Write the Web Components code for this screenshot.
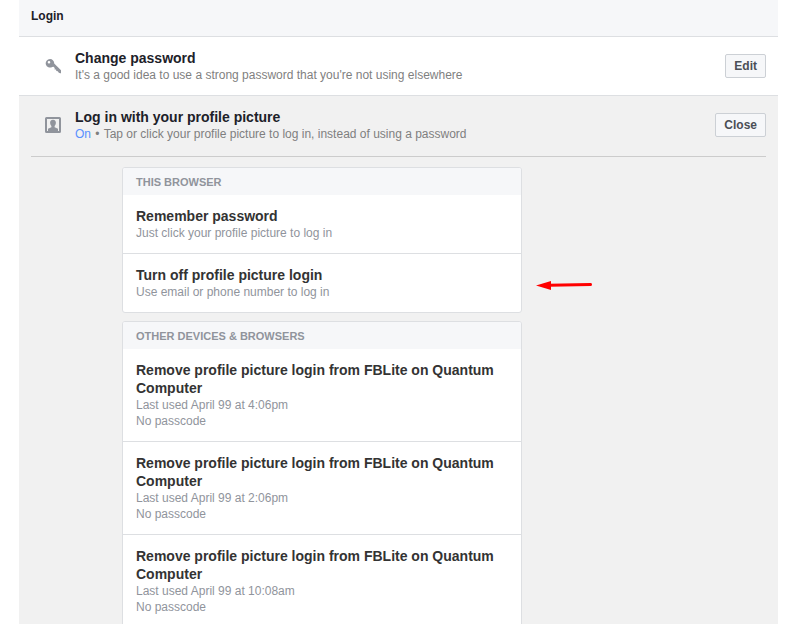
<!DOCTYPE html>
<html lang="en">
<head>
<meta charset="utf-8">
<meta name="viewport" content="width=device-width, initial-scale=1">
<title>Login settings</title>
<style>
    body {
        margin: 0;
        padding: 0 20px 0 19px;
        background: #fff;
        color: #1d2129;
        font-family: "Liberation Sans", Arial, Helvetica, sans-serif;
        font-size: 12px;
        line-height: 16px;
    }
</style>
</head>
<body>
<settings-panel heading="Login">
    <settings-row heading="Change password" action="Edit">
        <settings-icon slot="icon" name="key"></settings-icon>
        It's a good idea to use a strong password that you're not using elsewhere
    </settings-row>
    <settings-row heading="Log in with your profile picture" action="Close" status="On" open>
        <settings-icon slot="icon" name="profile"></settings-icon>
        Tap or click your profile picture to log in, instead of using a password
        <option-card slot="content" heading="This browser">
            <option-item heading="Remember password">Just click your profile picture to log in</option-item>
            <option-item heading="Turn off profile picture login">
                Use email or phone number to log in
                <pointer-arrow slot="marker"></pointer-arrow>
            </option-item>
        </option-card>
        <option-card slot="content" heading="Other devices &amp; browsers">
            <option-item heading="Remove profile picture login from FBLite on Quantum Computer">Last used April 99 at 4:06pm<br>No passcode</option-item>
            <option-item heading="Remove profile picture login from FBLite on Quantum Computer">Last used April 99 at 2:06pm<br>No passcode</option-item>
            <option-item heading="Remove profile picture login from FBLite on Quantum Computer">Last used April 99 at 10:08am<br>No passcode</option-item>
        </option-card>
    </settings-row>
</settings-panel>

<script>
class SettingsPanel extends HTMLElement {
    constructor(){
        super()
        this.shadowDOM = this.attachShadow({ mode: 'open' })
    }

    connectedCallback() {
        this.render()
    }

    render(){
        this.shadowDOM.innerHTML = `
            <style>
                :host {
                    display: block;
                }
                h2 {
                    margin: 0;
                    padding: 8px 12px 12px;
                    background: #f6f7f9;
                    border-bottom: 1px solid #dddfe2;
                    font-size: 12px;
                    line-height: 16px;
                }
            </style>
            <section>
                <h2>${this.getAttribute('heading')}</h2>
                <slot></slot>
            </section>
        `
    }
}

class SettingsRow extends HTMLElement {
    constructor(){
        super()
        this.shadowDOM = this.attachShadow({ mode: 'open' })
    }

    connectedCallback() {
        this.render()
    }

    render(){
        const status = this.getAttribute('status')
        this.shadowDOM.innerHTML = `
            <style>
                :host {
                    display: block;
                    padding: 0 12px;
                    background: #fff;
                }
                :host(:not([open])) {
                    border-bottom: 1px solid #dddfe2;
                }
                :host([open]) {
                    background: #f1f1f1;
                }
                .row {
                    display: flex;
                    align-items: center;
                    padding: 12px 0;
                }
                .icon {
                    display: flex;
                    flex: none;
                    width: 30px;
                    padding-left: 14px;
                }
                .text {
                    flex: 1;
                    min-width: 0;
                    color: #7f7f7f;
                }
                h3 {
                    margin: 0;
                    color: #1d2129;
                    font-size: 14px;
                    line-height: 18px;
                }
                .status {
                    color: #5890ff;
                }
                .dot {
                    margin: 0 1px;
                }
                button {
                    box-sizing: border-box;
                    height: 24px;
                    padding: 0 8px;
                    border: 1px solid #ccd0d5;
                    border-radius: 2px;
                    background: #f6f7f9;
                    color: #4b4f56;
                    font: bold 12px/22px "Liberation Sans", Arial, sans-serif;
                    cursor: pointer;
                }
                .content {
                    display: none;
                }
                :host([open]) .content {
                    display: flex;
                    flex-direction: column;
                    gap: 8px;
                    margin-top: 2px;
                    padding: 10px 0 12px 91px;
                    border-top: 1px solid #ccc;
                }
            </style>
            <div class="row">
                <div class="icon"><slot name="icon"></slot></div>
                <div class="text">
                    <h3>${this.getAttribute('heading')}</h3>
                    ${status ? `<span class="status">${status}</span> <span class="dot">•</span> ` : ''}<slot></slot>
                </div>
                <button type="button">${this.getAttribute('action')}</button>
            </div>
            <div class="content"><slot name="content"></slot></div>
        `
    }
}

class SettingsIcon extends HTMLElement {
    constructor(){
        super()
        this.shadowDOM = this.attachShadow({ mode: 'open' })
    }

    connectedCallback() {
        this.render()
    }

    render(){
        const shapes = {
            key: `<path fill-rule="evenodd" d="M5 1a4.300 4.300 0 1 0 2.200 8l1.300-.2 1.200 1.300-.1 1.300 1.500.2.2 1.400 1.500.2 1 1.600 1.400.4h.8v-3L9.200 5.600A4.300 4.300 0 0 0 5 1zM4 2.900a1.300 1.300 0 1 1 0 2.600 1.300 1.300 0 0 1 0-2.600z"/>`,
            profile: `<path fill-rule="evenodd" d="M1.500 0h13A1.500 1.500 0 0 1 16 1.500v13a1.500 1.500 0 0 1-1.500 1.500h-13A1.500 1.500 0 0 1 0 14.500v-13A1.500 1.500 0 0 1 1.500 0zM2 2v12h12V2z"/>
                <path d="M8 2.800C5.900 2.800 5 4.100 5.100 6c.1 1.300.6 2.300 1.300 3v1.200L3 11.800V14h10v-2.200l-3.400-1.600V9c.7-.7 1.200-1.700 1.300-3C11 4.100 10.100 2.800 8 2.800z"/>`
        }
        this.shadowDOM.innerHTML = `
            <style>
                :host {
                    display: block;
                }
                svg {
                    display: block;
                    fill: #90949c;
                }
            </style>
            <svg width="16" height="16" viewBox="0 0 16 16" aria-hidden="true">${shapes[this.getAttribute('name')]}</svg>
        `
    }
}

class OptionCard extends HTMLElement {
    constructor(){
        super()
        this.shadowDOM = this.attachShadow({ mode: 'open' })
    }

    connectedCallback() {
        this.render()
    }

    render(){
        this.shadowDOM.innerHTML = `
            <style>
                :host {
                    display: block;
                    box-sizing: border-box;
                    width: 100%;
                    max-width: 400px;
                    border: 1px solid #dddfe2;
                    border-radius: 3px;
                    background: #fff;
                }
                h4 {
                    margin: 0;
                    padding: 6px 13px 5px;
                    border-radius: 2px 2px 0 0;
                    background: #f6f7f9;
                    color: #90949c;
                    font-size: 11px;
                    line-height: 16px;
                    text-transform: uppercase;
                }
            </style>
            <h4>${this.getAttribute('heading')}</h4>
            <slot></slot>
        `
    }
}

class OptionItem extends HTMLElement {
    constructor(){
        super()
        this.shadowDOM = this.attachShadow({ mode: 'open' })
    }

    connectedCallback() {
        this.render()
    }

    render(){
        this.shadowDOM.innerHTML = `
            <style>
                :host {
                    display: block;
                    position: relative;
                    border-bottom: 1px solid #dddfe2;
                }
                :host(:last-child) {
                    border-bottom: 0;
                }
                button {
                    display: block;
                    width: 100%;
                    padding: 12px 13px;
                    border: 0;
                    background: none;
                    color: #90949c;
                    font: inherit;
                    text-align: left;
                    cursor: pointer;
                }
                strong {
                    display: block;
                    color: #333;
                    font-size: 14px;
                    line-height: 18px;
                }
            </style>
            <button type="button">
                <strong>${this.getAttribute('heading')}</strong>
                <slot></slot>
            </button>
            <slot name="marker"></slot>
        `
    }
}

class PointerArrow extends HTMLElement {
    constructor(){
        super()
        this.shadowDOM = this.attachShadow({ mode: 'open' })
    }

    connectedCallback() {
        this.render()
    }

    render(){
        this.shadowDOM.innerHTML = `
            <style>
                /* sits outside the card, next to the item */
                :host {
                    position: absolute;
                    top: 26px;
                    left: calc(100% + 15px);
                }
                svg {
                    display: block;
                }
            </style>
            <svg width="56" height="10" viewBox="0 0 56 10" aria-hidden="true">
                <path d="M13 5.300L54.500 4.600" stroke="#f00" stroke-width="3" stroke-linecap="round"/>
                <path d="M0 5.500L15 1v9z" fill="#f00"/>
            </svg>
        `
    }
}

customElements.define('settings-panel', SettingsPanel)
customElements.define('settings-row', SettingsRow)
customElements.define('settings-icon', SettingsIcon)
customElements.define('option-card', OptionCard)
customElements.define('option-item', OptionItem)
customElements.define('pointer-arrow', PointerArrow)
</script>
</body>
</html>
